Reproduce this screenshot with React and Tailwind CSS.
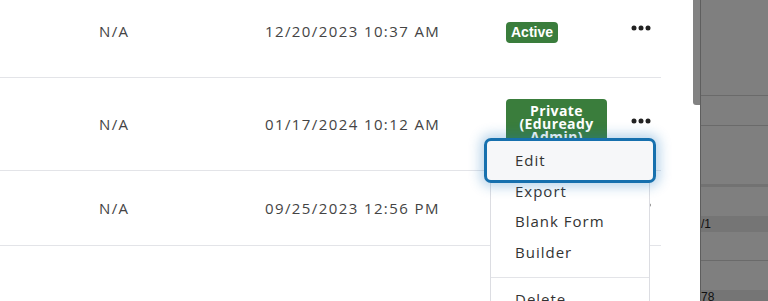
const rows = [
  { h: "h-[93px]", date: "12/20/2023 10:37 AM", badge: "Active" },
  { h: "h-[93px]", date: "01/17/2024 10:12 AM", badge: "Private (Eduready Admin)" },
  { h: "h-[75px]", date: "09/25/2023 12:56 PM", badge: null },
];

function Dots() {
  return (
    <svg width="20" height="6" viewBox="0 0 20 6" className="text-[#222]">
      <circle cx="3" cy="3" r="2.5" fill="currentColor" />
      <circle cx="10" cy="3" r="2.5" fill="currentColor" />
      <circle cx="17" cy="3" r="2.5" fill="currentColor" />
    </svg>
  );
}

export default function App() {
  return (
    <div className="flex w-[768px] h-[301px] overflow-hidden bg-white font-['Open_Sans',sans-serif]">
      {/* drawer panel */}
      <div className="relative w-[700px] h-full overflow-hidden bg-white">
        <div className="-mt-[15px] w-[661px]">
          {rows.map((r, i) => (
            <div
              key={i}
              className={`grid grid-cols-[99px_166px_241px_125px_1fr] items-center ${r.h} border-b border-[#e3e4e8] text-[15px] tracking-[1.4px] text-[#444]`}
            >
              <div />
              <div>N/A</div>
              <div>{r.date}</div>
              <div className="tracking-normal">
                {r.badge === "Active" && (
                  <span className="inline-block rounded-[4px] bg-[#3a7d3c] px-[5px] py-[2px] text-[14px] font-bold leading-[17px] text-white font-['Liberation_Sans',sans-serif]">
                    Active
                  </span>
                )}
                {r.badge && r.badge !== "Active" && (
                  <span className="mt-[2px] inline-block w-[101px] h-[46px] overflow-hidden rounded-[4px] bg-[#3a7d3c] pt-[5px] text-center text-[14px] font-bold leading-[13px] tracking-[0.4px] text-white">
                    Private (Eduready Admin)
                  </span>
                )}
              </div>
              <div className="-mt-[6px]">
                <Dots />
              </div>
            </div>
          ))}
        </div>

        {/* dropdown menu */}
        <div className="absolute left-[490px] top-[139px] w-[160px] h-[180px] border border-[#dcdde2] bg-white text-[15px] tracking-[1px] text-[#333]">
          <div className="h-[41px] bg-[#f6f7f9]" />
          <div className="flex flex-col pl-[24px]">
            <div className="h-[30px] leading-[20px]">Export</div>
            <div className="h-[31px] leading-[20px]">Blank Form</div>
            <div className="h-[30px] leading-[20px]">Builder</div>
          </div>
          <div className="mt-[5px] border-t border-[#e3e4e8]" />
          <div className="pl-[24px] pt-[10px]">Delete</div>
        </div>

        {/* focused item ring */}
        <div className="absolute left-[484px] top-[138px] flex h-[45px] w-[172px] items-center rounded-[7px] border-[3px] border-[#1670ae] bg-[#f6f7f9] pl-[28px] text-[15px] tracking-[1px] text-[#333] shadow-[0_0_12px_4px_rgba(30,120,190,0.3)]">
          Edit
        </div>

        {/* scrollbar */}
        <div className="absolute right-0 top-0 h-[105px] w-[7px] rounded-bl-[3px] bg-[#828282]" />
      </div>

      {/* dimmed background */}
      <div className="relative flex-1 h-full border-l border-[#5e5e5e] bg-[#7f7f7f] font-['Liberation_Sans',sans-serif] text-[12px] text-[#111]">
        <div className="h-[96px] border-b border-[#6a6a6a]" />
        <div className="h-[30px] border-b border-[#6a6a6a]" />
        <div className="h-[58px]" />
        <div className="h-[3px] bg-[#727272]" />
        <div className="h-[29px]" />
        <div className="h-[16px] bg-[#757575] leading-[16px]">/1</div>
        <div className="h-[29px] border-b border-[#6a6a6a]" />
        <div className="h-[29px]" />
        <div className="h-[12px] bg-[#757575] leading-[14px]">78</div>
      </div>
    </div>
  );
}
